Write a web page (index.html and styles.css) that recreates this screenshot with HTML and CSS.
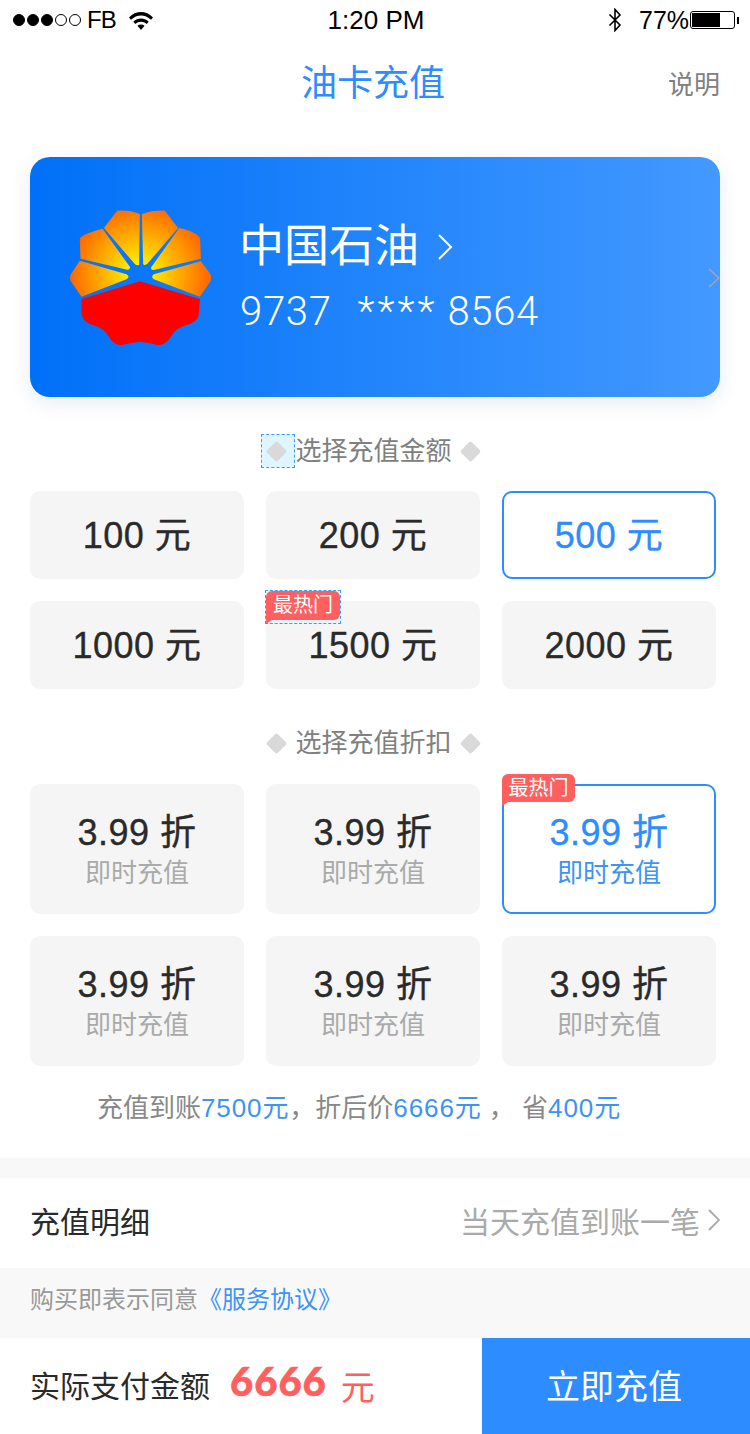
FILE: index.html
```html
<!DOCTYPE html>
<html lang="zh-CN">
<head>
<meta charset="utf-8">
<title>油卡充值</title>
<link rel="stylesheet" href="styles.css">
</head>
<body>
<div class="page">
  <div class="status">
    <div class="status-left">
      <span class="dots"><i class="dot on"></i><i class="dot on"></i><i class="dot on"></i><i class="dot"></i><i class="dot"></i></span>
      <span class="carrier">FB</span>
      <svg class="wifi" viewBox="0 0 24 19"><path d="M0 6.500C7-.8 17-.8 24 6.500l-2 2.200C16 3 8 3 2 8.700z"/><path d="M4.300 10.700c4.500-4.200 10.900-4.200 15.400 0l-2 2.200c-3.400-3-8-3-11.400 0z"/><path d="M8.500 14.800c2-1.700 5-1.700 7 0L12 19z"/></svg>
    </div>
    <div class="status-time">1:20 PM</div>
    <div class="status-right">
      <svg class="bt" viewBox="0 0 14 24"><path d="M1.500 6.500L12 17l-5 5.500V1.500L12 7 1.500 17.500" fill="none" stroke="#000" stroke-width="1.600"/></svg>
      <span class="pct">77%</span>
      <span class="battery"><span class="battery-fill"></span></span>
    </div>
  </div>

  <div class="nav">
    <span></span>
    <div class="nav-title">油卡充值</div>
    <div class="nav-link">说明</div>
  </div>

  <div class="card">
    <svg class="logo" viewBox="118 178 428 408">
      <defs>
        <radialGradient id="sun" gradientUnits="userSpaceOnUse" cx="330" cy="370" r="205">
          <stop offset="0.15" stop-color="#ffee00"/>
          <stop offset="1" stop-color="#ff6a00"/>
        </radialGradient>
      </defs>
      <g fill="url(#sun)">
        <path d="M222 232L262 180Q300 178 330 190L328 342Q322 346 315 340Z"/>
        <path d="M336 190Q370 178 405 180L445 232L352 340Q342 346 340 340Z"/>
        <path d="M218 234L301 350Q300 359 292 357L152 324L150 265Q155 250 218 234Z"/>
        <path d="M448 232Q505 245 511 265L513 324L372 358Q362 358 364 350Z"/>
        <path d="M150 330L290 371Q302 378 290 386L155 438L125 395Q116 380 125 368Z"/>
        <path d="M513 332L372 371Q362 378 372 386L510 438L540 395Q548 380 540 368Z"/>
      </g>
      <path fill="#f00" d="M155 445L330 392L510 445L507 490Q505 510 480 520Q440 530 425 555Q410 582 385 584Q355 575 330 573Q305 575 275 584Q250 582 235 555Q220 530 180 520Q158 510 155 490Z"/>
    </svg>
    <div class="card-info">
      <div class="card-name">中国石油<svg class="card-chev" viewBox="0 0 16 28"><path d="M2 2l12 12L2 26"/></svg></div>
      <div class="card-no"><span>9737</span><span class="mask">****</span><span>8564</span></div>
    </div>
    <svg class="card-next" viewBox="0 0 12 20"><path d="M1 1l10 9-10 9"/></svg>
  </div>

  <div class="heading first">
    <span class="diamond-wrap picked"><i class="diamond"></i></span>
    <span>选择充值金额</span>
    <span class="diamond-wrap"><i class="diamond"></i></span>
  </div>
  <div class="grid amounts">
    <div class="cell">100 元</div>
    <div class="cell">200 元</div>
    <div class="cell selected">500 元</div>
    <div class="cell">1000 元</div>
    <div class="cell"><span class="badge-frame"><span class="badge">最热门</span></span>1500 元</div>
    <div class="cell">2000 元</div>
  </div>

  <div class="heading">
    <span class="diamond-wrap"><i class="diamond"></i></span>
    <span>选择充值折扣</span>
    <span class="diamond-wrap"><i class="diamond"></i></span>
  </div>
  <div class="grid discounts">
    <div class="cell tall"><div>3.99 折</div><div class="sub">即时充值</div></div>
    <div class="cell tall"><div>3.99 折</div><div class="sub">即时充值</div></div>
    <div class="cell tall selected"><span class="badge plain">最热门</span><div>3.99 折</div><div class="sub">即时充值</div></div>
    <div class="cell tall"><div>3.99 折</div><div class="sub">即时充值</div></div>
    <div class="cell tall"><div>3.99 折</div><div class="sub">即时充值</div></div>
    <div class="cell tall"><div>3.99 折</div><div class="sub">即时充值</div></div>
  </div>

  <div class="summary">充值到账<em>7500元</em>，折后价<em>6666元</em> ， 省<em>400元</em></div>

  <div class="detail">
    <div class="detail-label">充值明细</div>
    <div class="detail-value">当天充值到账一笔<svg class="detail-chev" viewBox="0 0 12 22"><path d="M1 1l10 10L1 21"/></svg></div>
  </div>

  <div class="terms">购买即表示同意<em>《服务协议》</em></div>

  <div class="paybar">
    <div class="pay-info">
      <span class="pay-label">实际支付金额</span>
      <span class="pay-amount">6666</span>
      <span class="pay-unit">元</span>
    </div>
    <div class="pay-btn">立即充值</div>
  </div>
</div>
</body>
</html>
```
FILE: styles.css
```css
* { box-sizing: border-box; }
html, body { margin: 0; padding: 0; background: #fff; }
body { font-family: "Liberation Sans", "Noto Sans CJK SC", sans-serif; color: #2a2a2a; }
em { font-style: normal; color: #3d94f5; }
.page { width: 750px; height: 1434px; overflow: hidden; display: flex; flex-direction: column; }

.status { height: 40px; flex: none; padding: 0 11px 0 13px; display: grid; grid-template-columns: 1fr auto 1fr; align-items: center; color: #000; font-size: 26px; }
.status-left { display: flex; align-items: center; }
.dots { display: flex; gap: 2px; }
.dot { width: 12px; height: 12px; border-radius: 50%; border: 1px solid #000; display: block; }
.dot.on { background: #000; }
.carrier { margin-left: 6px; width: 29px; font-size: 24px; letter-spacing: -1px; }
.wifi { width: 24px; height: 19px; margin-left: 13px; fill: #000; }
.status-right { display: flex; align-items: center; justify-content: flex-end; }
.bt { width: 14px; height: 24px; margin-right: 17px; }
.pct { width: 51px; font-size: 25px; }
.battery { position: relative; width: 45px; height: 18px; border: 1px solid #000; border-radius: 3px; padding: 1px; display: block; margin-right: 4px; }
.battery::after { content: ""; position: absolute; right: -5px; top: 5px; width: 2px; height: 7px; background: #000; }
.battery-fill { display: block; width: 28px; height: 14px; background: #000; }

.nav { height: 86px; flex: none; display: grid; grid-template-columns: 1fr auto 1fr; align-items: center; padding: 0 30px 6px; }
.nav-title { font-size: 36px; color: #2d8cff; margin: 0 2px 0 -2px; }
.nav-link { font-size: 26px; color: #808080; text-align: right; margin-top: 4px; }

.card { position: relative; margin: 31px 30px 0; width: 690px; height: 240px; flex: none; border-radius: 20px; background: linear-gradient(90deg, #0070f8 0%, #4399ff 100%); box-shadow: 0 6px 20px rgba(0, 60, 140, .1); display: flex; align-items: center; padding-left: 40px; color: #fff; }
.logo { width: 143px; height: 136px; flex: none; margin-top: 1px; margin-left: -1px; }
.card-info { margin-left: 27px; margin-top: -3px; }
.card-name { font-size: 45px; line-height: 64px; display: flex; align-items: center; }
.card-chev { width: 16px; height: 28px; margin-left: 18px; fill: none; stroke: #fff; stroke-width: 2; }
.card-no { font-family: Roboto, sans-serif; font-weight: 300; font-size: 40px; line-height: 48px; letter-spacing: .7px; margin-top: 9px; padding-left: 1px; display: flex; }
.mask { margin: 0 10px 0 26px; letter-spacing: 3px; }
.card-next { position: absolute; right: 0; top: 111px; width: 12px; height: 20px; fill: none; stroke: #a6a6b0; stroke-width: 1.500; }

.heading { display: flex; justify-content: center; align-items: center; gap: 9px; font-size: 26px; color: #808080; line-height: 32px; margin-top: 38px; padding-right: 3px; flex: none; height: 32px; }
.diamond-wrap { position: relative; width: 20px; height: 20px; display: flex; align-items: center; justify-content: center; }
.diamond { display: block; width: 15px; height: 15px; background: #d9d9d9; border-radius: 2px; transform: rotate(45deg); }
.picked::before { content: ""; position: absolute; left: -5px; top: -7px; width: 32px; height: 32px; background: #dff5ff; border: 1px dashed #3a9cff; }
.picked .diamond { position: relative; }

.grid { display: grid; grid-template-columns: repeat(3, 214px); column-gap: 22px; row-gap: 22px; padding-left: 30px; flex: none; }
.amounts { margin-top: 24px; }
.discounts { margin-top: 25px; }
.cell { position: relative; height: 88px; border-radius: 10px; background: #f5f5f5; display: flex; flex-direction: column; align-items: center; justify-content: center; font-size: 36px; letter-spacing: .5px; -webkit-text-stroke: .35px currentColor; color: #2a2a2a; padding-bottom: 6px; }
.cell.tall { height: 130px; padding-bottom: 5px; }
.cell.selected { background: #fff; border: 2px solid #2d8cff; color: #2d8cff; }
.sub { font-size: 26px; line-height: 36px; letter-spacing: 0; -webkit-text-stroke: 0; color: #aaa; }
.selected .sub { color: #3d94f5; }

.badge-frame { position: absolute; left: -1px; top: -11px; width: 76px; height: 34px; background: #dff5ff; border: 1px dashed #3a9cff; }
.badge { display: block; width: 74px; height: 29px; background: #ff5f5f; color: #fff; font-size: 20px; line-height: 28px; letter-spacing: 0; -webkit-text-stroke: 0; text-align: center; border-radius: 6px 6px 6px 0; position: relative; }
.badge::after { content: ""; position: absolute; left: 0; top: 100%; width: 6px; height: 4px; background: #ff5f5f; clip-path: polygon(0 0, 100% 0, 0 100%); }
.badge.plain { position: absolute; left: -2px; top: -12px; width: 73px; height: 28px; line-height: 28px; }

.summary { font-size: 26px; line-height: 36px; color: #888; text-align: center; margin-top: 24px; padding-right: 32px; height: 68px; white-space: pre; flex: none; }
.summary em { letter-spacing: .9px; }

.detail { border-top: 20px solid #f8f8f8; height: 110px; flex: none; padding: 0 30px 6px; display: flex; justify-content: space-between; align-items: center; font-size: 30px; }
.detail-value { color: #aaa; display: flex; align-items: center; }
.detail-chev { width: 12px; height: 22px; margin-left: 8px; fill: none; stroke: #aaa; stroke-width: 1.800; }

.terms { height: 70px; flex: none; background: #f8f8f8; padding: 0 30px 11px; display: flex; align-items: center; font-size: 24px; color: #999; }

.paybar { height: 96px; flex: none; display: flex; background: #fff; }
.pay-info { width: 482px; display: flex; align-items: center; padding: 0 0 4px 30px; }
.pay-label { font-size: 30px; color: #2a2a2a; }
.pay-amount { font-family: Lato, sans-serif; font-weight: 900; font-size: 40px; letter-spacing: 1px; -webkit-text-stroke: .6px #ff5f5f; color: #ff5f5f; margin-left: 20px; margin-top: -6px; }
.pay-unit { font-size: 34px; color: #ff5f5f; margin-left: 14px; margin-top: 2px; }
.pay-btn { width: 268px; background: #2d8cff; color: #fff; font-size: 34px; display: flex; align-items: center; justify-content: center; padding: 0 4px 4px 0; }
```
